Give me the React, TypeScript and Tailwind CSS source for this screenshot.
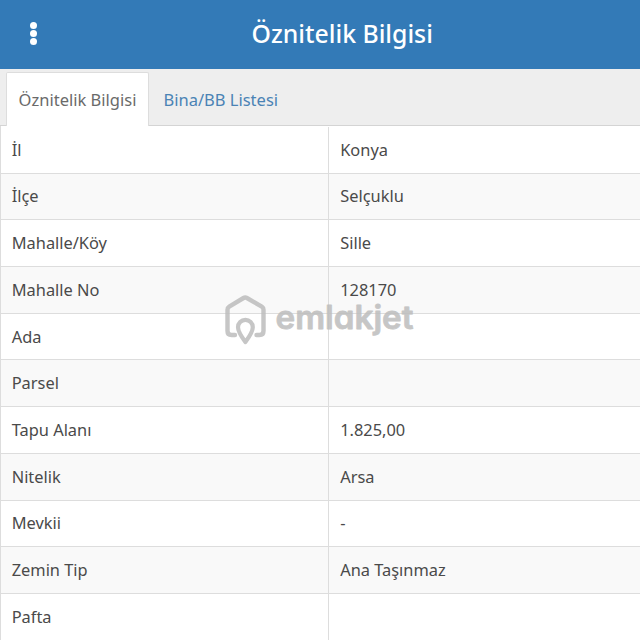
import React from "react";

const rows = [
  { label: "İl", value: "Konya" },
  { label: "İlçe", value: "Selçuklu" },
  { label: "Mahalle/Köy", value: "Sille" },
  { label: "Mahalle No", value: "128170" },
  { label: "Ada", value: "" },
  { label: "Parsel", value: "" },
  { label: "Tapu Alanı", value: "1.825,00" },
  { label: "Nitelik", value: "Arsa" },
  { label: "Mevkii", value: "-" },
  { label: "Zemin Tip", value: "Ana Taşınmaz" },
  { label: "Pafta", value: "" },
];

const Header: React.FC = () => (
  <header className="flex h-[69px] shrink-0 items-center bg-[#337ab7] pb-[2px] text-white">
    <button className="flex flex-col gap-[1.4px] pl-[29.5px]" aria-label="Menu">
      <span className="size-[7px] rounded-full bg-white" />
      <span className="size-[7px] rounded-full bg-white" />
      <span className="size-[7px] rounded-full bg-white" />
    </button>
    <h1 className="ml-[215px] whitespace-nowrap text-[24.8px] font-medium leading-none">
      Öznitelik Bilgisi
    </h1>
  </header>
);

const Tabs: React.FC = () => (
  <nav className="flex h-[57px] shrink-0 border-b border-[#d4d4d4] bg-[#eeeeee] pl-[6px] pt-[3px] text-[16.5px]">
    <a className="-mb-px flex w-[143px] items-center justify-center whitespace-nowrap rounded-t-[2px] border border-b-0 border-[#dddddd] bg-white pt-[1px] text-[#6a6a6a]">
      Öznitelik Bilgisi
    </a>
    <a className="flex items-center whitespace-nowrap pl-[14.5px] pt-[3px] text-[#4a83b5]">
      Bina/BB Listesi
    </a>
  </nav>
);

const Watermark: React.FC = () => (
  <svg
    className="absolute left-[220px] top-[288px]"
    width="200"
    height="64"
    viewBox="220 288 200 64"
    fill="none"
    opacity="0.85"
  >
    <path
      d="M235 335H231.500Q227.500 335 227.500 331V309.800Q227.500 307.800 229.200 306.700L243.500 298Q245.200 297 246.900 298L261.800 306.700Q263.500 307.800 263.500 309.800V331Q263.500 335 259.500 335H256.500"
      stroke="#bdbdbd"
      strokeWidth="4.400"
      strokeLinecap="round"
      strokeLinejoin="round"
    />
    <path
      d="M245.400 342Q238 332 238 327.200A7.400 7.400 0 0 1 252.800 327.200Q252.800 332 245.400 342Z"
      stroke="#bdbdbd"
      strokeWidth="4.200"
      strokeLinejoin="round"
    />
    <text
      x="275.500"
      y="329"
      textLength="138"
      lengthAdjust="spacingAndGlyphs"
      fill="#bdbdbd"
      stroke="#bdbdbd"
      strokeWidth="0.800"
      strokeLinejoin="round"
      className="font-['Inter',sans-serif] text-[32px] font-semibold [font-feature-settings:'cv11']"
    >
      emlakjet
    </text>
  </svg>
);

export default function App() {
  return (
    <div className="relative flex h-[640px] w-[640px] flex-col overflow-hidden bg-white font-['Noto_Sans',sans-serif]">
      <Header />
      <Tabs />
      <div className="border-l border-[#dddddd] pt-[0.88px] text-[16.4px] text-[#4a4a4a]">
        {rows.map((row) => (
          <div
            key={row.label}
            className="grid h-[46.72px] grid-cols-[328px_1fr] border-b border-[#dddddd] even:bg-[#f9f9f9]"
          >
            <div className="flex items-center border-r border-[#dddddd] pl-[10.7px] pt-[0.6px]">
              {row.label}
            </div>
            <div className="flex items-center pl-[11.2px] pt-[0.6px]">{row.value}</div>
          </div>
        ))}
      </div>
      <Watermark />
    </div>
  );
}
